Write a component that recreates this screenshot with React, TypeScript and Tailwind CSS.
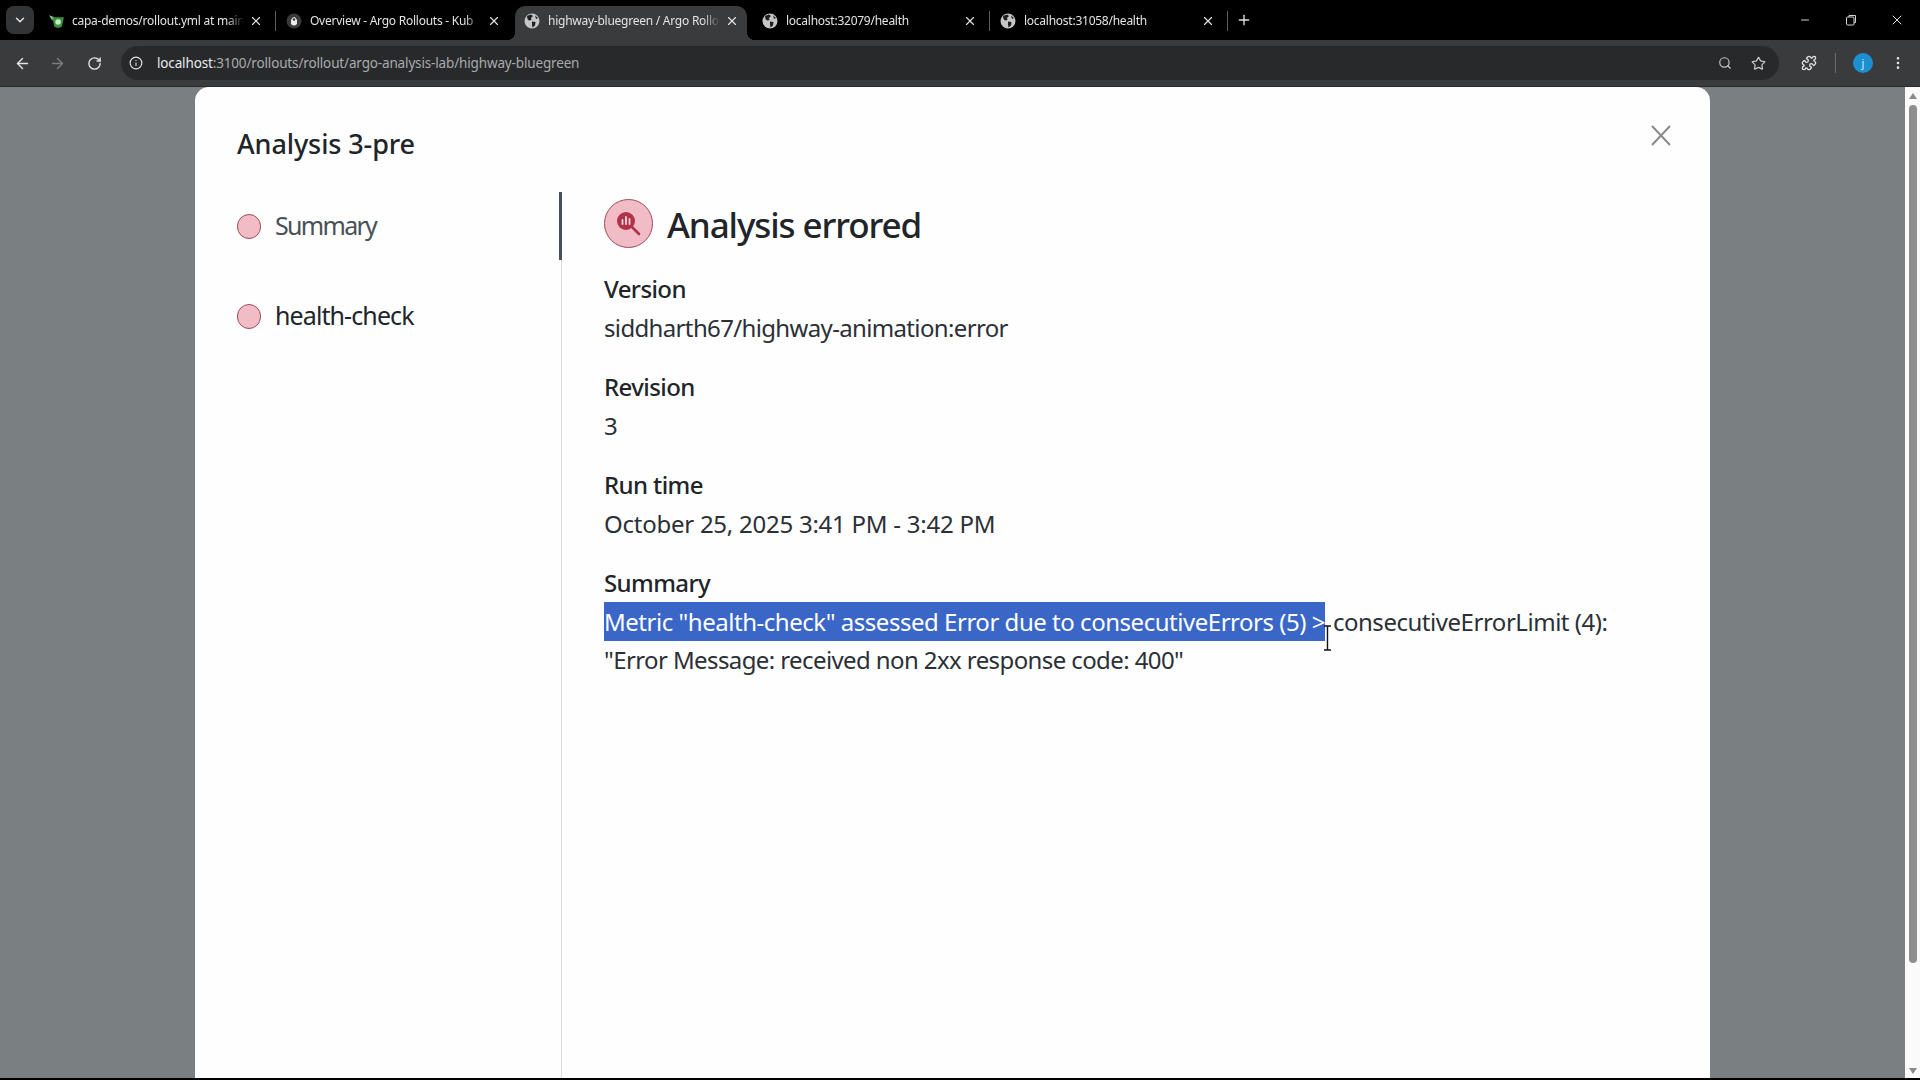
import { ArrowLeft, ArrowRight, Info, Minus, Plus, RotateCw, Search, Star, X, ChevronDown, Puzzle, EllipsisVertical } from 'lucide-react';

const font = { fontFamily: '"Noto Sans", "Open Sans", sans-serif' };

function GreenCup() {
  return (
    <svg width="17" height="15" viewBox="0 0 16 14" className="shrink-0">
      <path d="M1 1 L6 3 L4 6 Z" fill="#8fd18a" />
      <path d="M4 3 H15 L13 12 Q9.5 14 6 12 Z" fill="#3f8f42" />
      <circle cx="9.5" cy="7.5" r="2.6" fill="#bfeeb8" />
    </svg>
  );
}

function ArgoIcon() {
  return (
    <svg width="16" height="16" viewBox="0 0 16 16" className="shrink-0">
      <circle cx="8" cy="8" r="7.5" fill="#3a3a3a" />
      <path d="M5 7 Q8 1 11 7 L11 11 Q8 14 5 11 Z" fill="#ececec" />
      <circle cx="8" cy="6.5" r="1.3" fill="#3a3a3a" />
    </svg>
  );
}

function GlobeIcon() {
  return (
    <svg width="16" height="16" viewBox="0 0 16 16" className="shrink-0">
      <circle cx="8" cy="8" r="7.5" fill="#c4c7c5" />
      <path d="M3 3 L7 1.5 L9 3 L7 5 L7.5 7 L5 7.5 L3.5 6 Z M8 8.5 L11.5 9 L11 12.5 L8.5 14.5 L8 11.5 Z M11 2.5 L14 5 L12 6 Z" fill="#1f1f1f" />
    </svg>
  );
}

function Tab({ title, icon, active, sep }: { title: string; icon: React.ReactNode; active?: boolean; sep?: boolean }) {
  return (
    <div className={`relative flex h-[34px] shrink-0 items-center pb-[4px] ${active ? 'ml-px mr-[5px] w-[232px] rounded-t-[10px] bg-[#3a3b3c] pl-[9px] pr-[8px]' : 'w-[238px] pl-[10px] pr-[13px]'}`}>
      {active && <span className="absolute bottom-0 -left-2 h-2 w-2 bg-[radial-gradient(circle_at_0_0,transparent_8px,#3a3b3c_8px)]" />}
      {active && <span className="absolute bottom-0 -right-2 h-2 w-2 bg-[radial-gradient(circle_at_100%_0,transparent_8px,#3a3b3c_8px)]" />}
      <span className="flex w-[16px] shrink-0 items-center justify-center">{icon}</span>
      <span className="ml-[8px] w-[172px] overflow-hidden whitespace-nowrap text-[12px] leading-[20px] tracking-[-0.25px] text-[#e3e3e3] [mask-image:linear-gradient(to_right,black_90%,transparent)]">{title}</span>
      <X size={14} strokeWidth={2} className="ml-auto text-[#e3e3e3]" />
      {sep && <span className="absolute right-0 top-[5px] h-[20px] w-px bg-[#5a5a5a]" />}
    </div>
  );
}

function StatusDot() {
  return <span className="h-[25px] w-[24px] shrink-0 rounded-full border border-[#a04a5c] bg-[#f1bcc6]" />;
}

function Field({ label, value, spacing }: { label: string; value: string; spacing: string }) {
  return (
    <div className="mb-[20px]">
      <div className="text-[24px] font-medium leading-[40px] tracking-[-0.6px] text-[#212529]">{label}</div>
      <div className={`text-[24px] leading-[38px] text-[#2b3036] ${spacing}`}>{value}</div>
    </div>
  );
}

export default function App() {
  const globe = <GlobeIcon />;
  return (
    <div className="flex h-screen w-screen flex-col overflow-hidden bg-black" style={font}>
      {/* tab strip */}
      <div className="flex h-[40px] shrink-0 items-end bg-black">
        <div className="mb-[6px] ml-[6px] mr-[4px] flex h-[28px] w-[28px] items-center justify-center rounded-lg bg-[#333435]">
          <ChevronDown size={14} strokeWidth={2.5} className="text-[#e3e3e3]" />
        </div>
        <Tab title="capa-demos/rollout.yml at main" icon={<GreenCup />} sep />
        <Tab title="Overview - Argo Rollouts - Kub" icon={<ArgoIcon />} />
        <Tab title="highway-bluegreen / Argo Rollo" icon={globe} active />
        <Tab title="localhost:32079/health" icon={globe} sep />
        <Tab title="localhost:31058/health" icon={globe} sep />
        <div className="mb-[6px] ml-[8px] flex h-[28px] items-center">
          <Plus size={16} strokeWidth={2} className="text-[#e3e3e3]" />
        </div>
        <div className="mb-[6px] ml-auto flex h-[28px] items-center">
          <Minus size={12} className="text-[#d0d0d0]" />
          <svg width="12" height="12" viewBox="0 0 12 12" className="ml-[34px] text-[#d0d0d0]" fill="none" stroke="currentColor">
            <rect x="1.5" y="3" width="7.5" height="8" rx="1" />
            <path d="M4 3 V1.5 H10.5 V8.5 H9" />
          </svg>
          <X size={16} strokeWidth={1.5} className="ml-[32px] mr-[15px] text-[#e3e3e3]" />
        </div>
      </div>

      {/* toolbar */}
      <div className="flex h-[47px] shrink-0 items-center border-b border-[#2a2b2c] bg-[#3a3b3c]">
        <ArrowLeft size={17} className="ml-[14px] text-[#e3e3e3]" />
        <ArrowRight size={17} className="ml-[18px] text-[#7d7e7f]" />
        <RotateCw size={15} strokeWidth={2.2} className="ml-[21px] text-[#e3e3e3]" />
        <div className="ml-[19px] flex h-[34px] w-[1658px] items-center rounded-full bg-[#28292b]">
          <Info size={14} className="ml-[8px] text-[#e3e3e3]" />
          <span className="ml-[14px] text-[13.5px] tracking-[-0.15px] text-[#a8abae]">
            <span className="text-[#e8eaed]">localhost</span>:3100/rollouts/rollout/argo-analysis-lab/highway-bluegreen
          </span>
          <Search size={14} className="ml-auto text-[#c4c7c5]" />
          <Star size={15} className="ml-[19px] mr-[13px] text-[#c4c7c5]" />
        </div>
        <Puzzle size={16} className="ml-[22px] text-[#e3e3e3]" />
        <span className="ml-[18px] h-[20px] w-px bg-[#6a6a6a]" />
        <span className="ml-[17px] flex h-[20px] w-[20px] items-center justify-center rounded-full bg-[#1c8fd0] text-[11px] text-[#d8eefa]">j</span>
        <EllipsisVertical size={16} className="ml-[17px] text-[#e3e3e3]" />
      </div>

      {/* page */}
      <div className="relative flex h-[991px] shrink-0 overflow-hidden bg-[#7a7f82]">
        <div className="ml-[195px] h-full w-[1515px] shrink-0 rounded-t-[14px] bg-[#fefefe]">
          <div className="flex h-[105px] items-start justify-between pl-[42px] pr-[39px] pt-[37px]">
            <h1 className="text-[27px] font-medium leading-[40px] tracking-[-0.1px] text-[#212529]">Analysis 3-pre</h1>
            <svg width="20" height="21" viewBox="0 0 20 21" className="mt-px" stroke="#8a8a8a" strokeWidth="2">
              <path d="M1 1 L19 20 M19 1 L1 20" />
            </svg>
          </div>
          <div className="flex h-[886px]">
            <div className="w-[367px] shrink-0 border-r border-[#dcdcdc]">
              <div className="-mr-px flex h-[68px] items-center gap-[14px] border-r-[3px] border-[#495057] pl-[42px]">
                <StatusDot />
                <span className="text-[25px] tracking-[-1.7px] text-[#495057]">Summary</span>
              </div>
              <div className="mt-[22px] flex h-[68px] items-center gap-[14px] pl-[42px]">
                <StatusDot />
                <span className="text-[25px] tracking-[-0.9px] text-[#212529]">health-check</span>
              </div>
            </div>
            <div className="min-w-0 flex-1 pl-[42px] pt-[7px]">
              <div className="flex h-[70px] items-start gap-[14px]">
                <span className="flex h-[49px] w-[49px] shrink-0 items-center justify-center rounded-full border border-[#a04a5c] bg-[#f1bcc6]">
                  <svg width="27" height="27" viewBox="0 0 27 27">
                    <circle cx="11" cy="11" r="9" fill="#b0324a" />
                    <path d="M17 17 L24 24" stroke="#b0324a" strokeWidth="2.6" strokeLinecap="round" />
                    <path d="M7.5 10 V14 M11 7 V14 M14.5 9 V14" stroke="#f7d5db" strokeWidth="1.8" strokeLinecap="round" />
                  </svg>
                </span>
                <h2 className="mt-px text-[35px] font-medium leading-[50px] tracking-[-1.1px] text-[#212529]">Analysis errored</h2>
              </div>
              <Field label="Version" value="siddharth67/highway-animation:error" spacing="tracking-[-0.65px]" />
              <Field label="Revision" value="3" spacing="tracking-[-0.5px]" />
              <Field label="Run time" value="October 25, 2025 3:41 PM - 3:42 PM" spacing="tracking-[-0.25px]" />
              <div>
                <div className="text-[24px] font-medium leading-[39px] tracking-[-0.6px] text-[#212529]">Summary</div>
                <div className="w-[1040px] text-[24px] leading-[38px] tracking-[-0.47px] text-[#2b3036]">
                  <span className="inline-block h-[39px] bg-[#3a66c8] leading-[39px] text-white">Metric "health-check" assessed Error due to consecutiveErrors (5) &gt;</span>{' '}
                  <span className="ml-[2px]">consecutiveErrorLimit (4):</span> <br />
                  <span className="tracking-[-0.6px]">"Error Message: received non 2xx response code: 400"</span>
                </div>
              </div>
            </div>
          </div>
        </div>

        {/* scrollbar */}
        <div className="ml-auto flex h-full w-[15px] shrink-0 flex-col items-center bg-[#fafafa] pt-[6px]">
          <span className="h-0 w-0 border-x-[4px] border-b-[6px] border-x-transparent border-b-[#8a8a8a]" />
          <span className="mt-[6px] h-[858px] w-[8px] rounded-full bg-[#8e8e8e]" />
          <span className="mt-auto mb-[4px] h-0 w-0 border-x-[4px] border-t-[6px] border-x-transparent border-t-[#8a8a8a]" />
        </div>

        {/* text cursor */}
        <svg width="9" height="26" viewBox="0 0 9 26" className="absolute left-[1323px] top-[538px]" fill="none" stroke="#111" strokeWidth="1.4">
          <path d="M1 1 H8 M4.5 1 V25 M1 25 H8" />
        </svg>
      </div>
    </div>
  );
}
